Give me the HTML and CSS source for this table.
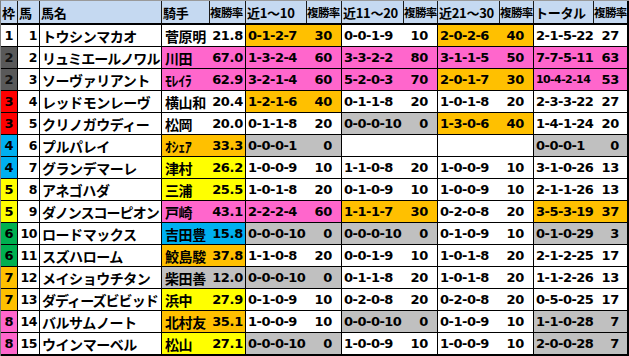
FILE: index.html
```html
<!DOCTYPE html>
<html lang="ja">
<head>
<meta charset="utf-8">
<title>複勝率</title>
<link rel="stylesheet" href="styles.css">
</head>
<body>
<div class="sheet">
  <div class="row head">
    <div class="c">枠</div><div class="c">馬</div><div class="c">馬名</div><div class="c">騎手</div><div class="c sm">複勝率</div>
    <div class="c">近1～10</div><div class="c sm">複勝率</div><div class="c">近11～20</div><div class="c sm">複勝率</div>
    <div class="c">近21～30</div><div class="c sm">複勝率</div><div class="c">トータル</div><div class="c sm">複勝率</div>
  </div>

  <div class="row"><div class="c w w1">1</div><div class="c no">1</div><div class="c name">トウシンマカオ</div><div class="c jk">菅原明</div><div class="c jr">21.8</div>
    <div class="c rec o">0-1-2-7</div><div class="c rt o">30</div><div class="c rec">0-0-1-9</div><div class="c rt">10</div><div class="c rec o">2-0-2-6</div><div class="c rt o">40</div><div class="c rec">2-1-5-22</div><div class="c rt end">27</div></div>

  <div class="row"><div class="c w w2">2</div><div class="c no">2</div><div class="c name tight">リュミエールノワル</div><div class="c jk p">川田</div><div class="c jr p">67.0</div>
    <div class="c rec p">1-3-2-4</div><div class="c rt p">60</div><div class="c rec p">3-3-2-2</div><div class="c rt p">80</div><div class="c rec p">3-1-1-5</div><div class="c rt p">50</div><div class="c rec p">7-7-5-11</div><div class="c rt end p">63</div></div>

  <div class="row"><div class="c w w2">2</div><div class="c no">3</div><div class="c name">ソーヴァリアント</div><div class="c jk p">ﾓﾚｲﾗ</div><div class="c jr p">62.9</div>
    <div class="c rec p">3-2-1-4</div><div class="c rt p">60</div><div class="c rec p">5-2-0-3</div><div class="c rt p">70</div><div class="c rec o">2-0-1-7</div><div class="c rt o">30</div><div class="c rec p small">10-4-2-14</div><div class="c rt end p">53</div></div>

  <div class="row"><div class="c w w3">3</div><div class="c no">4</div><div class="c name">レッドモンレーヴ</div><div class="c jk">横山和</div><div class="c jr">20.4</div>
    <div class="c rec o">1-2-1-6</div><div class="c rt o">40</div><div class="c rec">0-1-1-8</div><div class="c rt">20</div><div class="c rec">1-0-1-8</div><div class="c rt">20</div><div class="c rec">2-3-3-22</div><div class="c rt end">27</div></div>

  <div class="row"><div class="c w w3">3</div><div class="c no">5</div><div class="c name">クリノガウディー</div><div class="c jk">松岡</div><div class="c jr">20.0</div>
    <div class="c rec">0-1-1-8</div><div class="c rt">20</div><div class="c rec g">0-0-0-10</div><div class="c rt g">0</div><div class="c rec o">1-3-0-6</div><div class="c rt o">40</div><div class="c rec">1-4-1-24</div><div class="c rt end">20</div></div>

  <div class="row"><div class="c w w4">4</div><div class="c no">6</div><div class="c name">プルパレイ</div><div class="c jk o">ｵｼｪｱ</div><div class="c jr o">33.3</div>
    <div class="c rec g">0-0-0-1</div><div class="c rt g">0</div><div class="c rec"></div><div class="c rt"></div><div class="c rec"></div><div class="c rt"></div><div class="c rec g">0-0-0-1</div><div class="c rt end g">0</div></div>

  <div class="row"><div class="c w w4">4</div><div class="c no">7</div><div class="c name">グランデマーレ</div><div class="c jk y">津村</div><div class="c jr y">26.2</div>
    <div class="c rec">1-0-0-9</div><div class="c rt">10</div><div class="c rec">1-1-0-8</div><div class="c rt">20</div><div class="c rec">1-0-0-9</div><div class="c rt">10</div><div class="c rec">3-1-0-26</div><div class="c rt end">13</div></div>

  <div class="row"><div class="c w w5">5</div><div class="c no">8</div><div class="c name">アネゴハダ</div><div class="c jk y">三浦</div><div class="c jr y">25.5</div>
    <div class="c rec">1-0-1-8</div><div class="c rt">20</div><div class="c rec">0-1-0-9</div><div class="c rt">10</div><div class="c rec">1-0-0-9</div><div class="c rt">10</div><div class="c rec">2-1-1-26</div><div class="c rt end">13</div></div>

  <div class="row"><div class="c w w5">5</div><div class="c no">9</div><div class="c name tight">ダノンスコーピオン</div><div class="c jk p">戸崎</div><div class="c jr p">43.1</div>
    <div class="c rec p">2-2-2-4</div><div class="c rt p">60</div><div class="c rec o">1-1-1-7</div><div class="c rt o">30</div><div class="c rec">0-2-0-8</div><div class="c rt">20</div><div class="c rec o">3-5-3-19</div><div class="c rt end o">37</div></div>

  <div class="row"><div class="c w w6">6</div><div class="c no">10</div><div class="c name">ロードマックス</div><div class="c jk b">吉田豊</div><div class="c jr b">15.8</div>
    <div class="c rec g">0-0-0-10</div><div class="c rt g">0</div><div class="c rec g">0-0-0-10</div><div class="c rt g">0</div><div class="c rec">0-1-0-9</div><div class="c rt">10</div><div class="c rec g">0-1-0-29</div><div class="c rt end g">3</div></div>

  <div class="row"><div class="c w w6">6</div><div class="c no">11</div><div class="c name">スズハローム</div><div class="c jk o">鮫島駿</div><div class="c jr o">37.8</div>
    <div class="c rec">1-1-0-8</div><div class="c rt">20</div><div class="c rec">0-0-1-9</div><div class="c rt">10</div><div class="c rec">1-0-1-8</div><div class="c rt">20</div><div class="c rec">2-1-2-25</div><div class="c rt end">17</div></div>

  <div class="row"><div class="c w w7">7</div><div class="c no">12</div><div class="c name">メイショウチタン</div><div class="c jk g">柴田善</div><div class="c jr g">12.0</div>
    <div class="c rec g">0-0-0-10</div><div class="c rt g">0</div><div class="c rec">0-1-1-8</div><div class="c rt">20</div><div class="c rec">1-0-1-8</div><div class="c rt">20</div><div class="c rec">1-1-2-26</div><div class="c rt end">13</div></div>

  <div class="row"><div class="c w w7">7</div><div class="c no">13</div><div class="c name tight">ダディーズビビッド</div><div class="c jk y">浜中</div><div class="c jr y">27.9</div>
    <div class="c rec">0-1-0-9</div><div class="c rt">10</div><div class="c rec">0-2-0-8</div><div class="c rt">20</div><div class="c rec">0-2-0-8</div><div class="c rt">20</div><div class="c rec">0-5-0-25</div><div class="c rt end">17</div></div>

  <div class="row"><div class="c w w8">8</div><div class="c no">14</div><div class="c name">バルサムノート</div><div class="c jk o">北村友</div><div class="c jr o">35.1</div>
    <div class="c rec">1-0-0-9</div><div class="c rt">10</div><div class="c rec g">0-0-0-10</div><div class="c rt g">0</div><div class="c rec">0-1-0-9</div><div class="c rt">10</div><div class="c rec g">1-1-0-28</div><div class="c rt end g">7</div></div>

  <div class="row last"><div class="c w w8">8</div><div class="c no">15</div><div class="c name">ウインマーベル</div><div class="c jk y">松山</div><div class="c jr y">27.1</div>
    <div class="c rec g">0-0-0-10</div><div class="c rt g">0</div><div class="c rec">1-0-0-9</div><div class="c rt">10</div><div class="c rec">1-0-0-9</div><div class="c rt">10</div><div class="c rec g">2-0-0-28</div><div class="c rt end g">7</div></div>
</div>
</body>
</html>
```
FILE: styles.css
```css
html, body {
  margin: 0;
  padding: 0;
  background: #ffffff;
}

.sheet {
  width: 628px;
  border-left: 1px solid #7f7f7f;
  border-top: 1px solid #9a9a9a;
  color: #000;
  font-family: "Noto Sans CJK JP", sans-serif;
  font-weight: 700;
}

.row {
  display: grid;
  grid-template-columns: 17px 22px 122px 48px 36px 61px 35px 62px 34px 62px 34px 60px 35px;
  height: 22px;
  border-bottom: 1px solid #000;
  box-sizing: border-box;
  background: #ffffff;
}

.row.last {
  height: 23px;
  border-bottom: 2px solid #000;
}

.c {
  display: flex;
  align-items: center;
  box-sizing: border-box;
  overflow: hidden;
  white-space: nowrap;
  min-width: 0;
}

/* header */
.head {
  height: 24px;
  background: #c5d9f1;
  border-bottom: 2px solid #000;
}

.head .c {
  border-right: 1px solid #1a1a1a;
  font-size: 13px;
  padding-left: 1px;
  letter-spacing: -0.3px;
}

.head .c:last-child {
  border-right: 2px solid #000;
}

.head .c.sm {
  font-size: 11.5px;
  letter-spacing: -0.6px;
  padding-left: 0;
}

/* data cells */
.w {
  justify-content: center;
  border-right: 1px solid #000;
  font-family: "DejaVu Sans", sans-serif;
  font-size: 13px;
}

.w1 { background: #ffffff; }
.w2 { background: #595959; color: #111; }
.w3 { background: #ff0000; }
.w4 { background: #00b0f0; }
.w5 { background: #ffff00; }
.w6 { background: #00b050; }
.w7 { background: #ffc000; }
.w8 { background: #ff66cc; }

.no {
  justify-content: flex-end;
  padding-right: 2px;
  border-right: 1px solid #000;
  font-family: "DejaVu Sans", sans-serif;
  font-size: 12.5px;
  letter-spacing: -0.5px;
}

.name {
  padding-left: 2px;
  border-right: 1px solid #000;
  font-size: 14px;
  letter-spacing: -0.45px;
}

.name.tight {
  letter-spacing: -0.95px;
}

.jk {
  padding-left: 3px;
  font-size: 14px;
  letter-spacing: -0.4px;
}

.jr {
  justify-content: flex-end;
  padding-right: 2px;
  border-right: 1px solid #000;
  font-family: "DejaVu Sans", sans-serif;
  font-size: 13px;
  letter-spacing: -0.3px;
}

.rec {
  padding-left: 2px;
  font-family: "DejaVu Sans", sans-serif;
  font-size: 13px;
  letter-spacing: -0.5px;
}

.rec.small {
  font-size: 11px;
  letter-spacing: -0.6px;
}

.rt {
  justify-content: flex-end;
  padding-right: 9px;
  border-right: 1px solid #000;
  font-family: "DejaVu Sans", sans-serif;
  font-size: 13px;
  letter-spacing: -0.3px;
}

.rt.end {
  border-right: 2px solid #000;
  padding-right: 8px;
}

/* fills */
.o { background: #ffc000; }
.p { background: #ff66cc; }
.g { background: #c0c0c0; }
.y { background: #ffff00; }
.b { background: #00b0f0; }
```
